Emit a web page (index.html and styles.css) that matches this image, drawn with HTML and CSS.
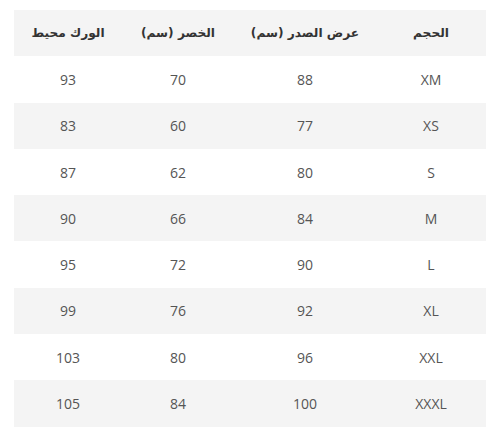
FILE: index.html
```html
<!DOCTYPE html>
<html lang="ar" dir="rtl">
<head>
<meta charset="utf-8">
<link rel="stylesheet" href="styles.css">
</head>
<body>
<table class="size-table">
  <colgroup>
    <col class="c-size">
    <col class="c-chest">
    <col class="c-waist">
    <col class="c-hip">
  </colgroup>
  <thead>
    <tr><th>الحجم</th><th>عرض الصدر (سم)</th><th>الخصر (سم)</th><th>الورك محيط</th></tr>
  </thead>
  <tbody>
    <tr><td>XM</td><td>88</td><td>70</td><td>93</td></tr>
    <tr><td>XS</td><td>77</td><td>60</td><td>83</td></tr>
    <tr><td>S</td><td>80</td><td>62</td><td>87</td></tr>
    <tr><td>M</td><td>84</td><td>66</td><td>90</td></tr>
    <tr><td>L</td><td>90</td><td>72</td><td>95</td></tr>
    <tr><td>XL</td><td>92</td><td>76</td><td>99</td></tr>
    <tr><td>XXL</td><td>96</td><td>80</td><td>103</td></tr>
    <tr><td>XXXL</td><td>100</td><td>84</td><td>105</td></tr>
  </tbody>
</table>
</body>
</html>
```

FILE: styles.css
```css
html, body {
  margin: 0;
  padding: 0;
  background: #ffffff;
}
body {
  padding: 10px 14px 0 14px;
  font-family: "Open Sans", "DejaVu Sans", sans-serif;
  font-size: 14px;
  color: #555555;
}
.size-table {
  width: 472px;
  border-collapse: collapse;
  table-layout: fixed;
}
.c-size { width: 110px; }
.c-chest { width: 142px; }
.c-waist { width: 112px; }
.c-hip { width: 108px; }
.size-table th,
.size-table td {
  height: 46.3px;
  padding: 0;
  text-align: center;
  vertical-align: middle;
}
.size-table th {
  font-family: "DejaVu Sans", sans-serif;
  font-weight: bold;
  font-size: 12.2px;
  color: #333333;
  background: #f4f4f4;
}
.size-table tbody tr:nth-child(even) td {
  background: #f4f4f4;
}
```
